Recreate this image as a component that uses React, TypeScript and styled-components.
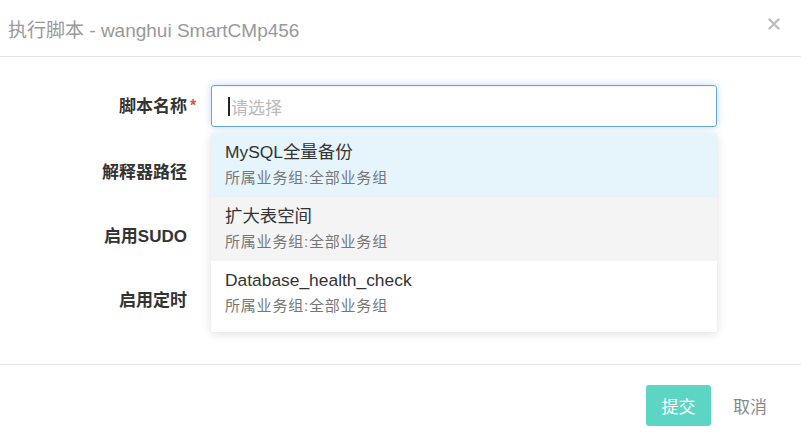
import React from 'react';
import styled, {createGlobalStyle} from 'styled-components';

const GlobalStyle = createGlobalStyle`
  html, body {
    margin: 0;
    padding: 0;
    background: #fff;
  }
  body {
    font-family: "Liberation Sans", Arial, "Noto Sans CJK SC", sans-serif;
    color: #333;
  }
`

const Modal = styled.div`
  width: 801px;
  height: 442px;
  background: #fff;
  display: flex;
  flex-direction: column;
  box-sizing: border-box;
`

const Header = styled.div`
  height: 56px;
  flex-shrink: 0;
  border-bottom: 1px solid #e5e5e5;
  display: flex;
  align-items: center;
  justify-content: space-between;
  padding: 0 21px 0 8px;
`

const Title = styled.h4`
  margin: 0;
  font-weight: normal;
  font-size: 19px;
  color: #999;
  padding-top: 1px;
`

const Close = styled.button`
  border: none;
  background: none;
  padding: 0;
  margin-top: -9px;
  cursor: pointer;
  display: flex;
`

const Body = styled.div`
  flex: 1;
  padding-top: 28px;
  display: flex;
  flex-direction: column;
  gap: 22px;
`

const Row = styled.div`
  display: grid;
  grid-template-columns: 187px 506px;
  column-gap: 24px;
  align-items: center;
  height: 42px;
  position: relative;
`

const Label = styled.label`
  text-align: right;
  font-size: 17px;
  font-weight: bold;
  color: #333;
  position: relative;
  top: ${p => (p.$shift ? p.$shift : 0)}px;
`

const Required = styled.span`
  position: absolute;
  left: 100%;
  top: 5px;
  margin-left: 3px;
  font-size: 16px;
  color: #d9534f;
  font-weight: bold;
`

const Field = styled.div`
  position: relative;
  height: 100%;
`

const Select = styled.div`
  height: 42px;
  box-sizing: border-box;
  border: 1px solid #66a9d8;
  border-radius: 3px;
  box-shadow: inset 0 1px 1px rgba(0, 0, 0, 0.05), 0 0 7px rgba(102, 175, 233, 0.45);
  display: flex;
  align-items: center;
  padding-left: 16px;
  font-size: 17px;
`

const Caret = styled.span`
  display: inline-block;
  width: 2px;
  height: 19px;
  background: #222;
  margin-right: 1px;
`

const Placeholder = styled.span`
  color: #bbb;
`

const Menu = styled.ul`
  position: absolute;
  top: 48px;
  left: 0;
  width: 506px;
  margin: 0;
  padding: 0 0 7px;
  list-style: none;
  background: #fff;
  border-radius: 3px;
  box-shadow: 0 2px 10px rgba(0, 0, 0, 0.13);
  z-index: 10;
`

const Option = styled.li`
  height: 64px;
  box-sizing: border-box;
  padding: 8px 14px 0;
  background: ${p => p.$bg};
`

const OptionName = styled.div`
  font-size: 17.4px;
  line-height: 22px;
  color: #333;
`

const OptionGroup = styled.div`
  margin-top: 5px;
  font-size: 15px;
  letter-spacing: 0.8px;
  line-height: 20px;
  color: #777;
`

const Footer = styled.div`
  height: 78px;
  flex-shrink: 0;
  box-sizing: border-box;
  border-top: 1px solid #e5e5e5;
  display: flex;
  justify-content: flex-end;
  align-items: flex-start;
  padding: 20px 24px 0 0;
  gap: 12px;
`

const Submit = styled.button`
  width: 65px;
  height: 41px;
  border: none;
  border-radius: 3px;
  background: #5dd5c5;
  color: #fff;
  font-size: 17px;
  font-family: inherit;
`

const Cancel = styled.button`
  height: 41px;
  border: none;
  background: none;
  color: #888;
  font-size: 17px;
  font-family: inherit;
  padding: 0 10px;
`

const scripts = [
  {name: 'MySQL全量备份', group: '全部业务组', bg: '#e6f4fc'},
  {name: '扩大表空间', group: '全部业务组', bg: '#f4f4f4'},
  {name: 'Database_health_check', group: '全部业务组', bg: '#fff'},
]

const App: React.FC = () => {
  return (
    <Modal>
      <GlobalStyle />
      <Header>
        <Title>执行脚本 - wanghui SmartCMp456</Title>
        <Close aria-label="close">
          <svg width="12" height="12" viewBox="0 0 12 12">
            <path d="M1.5 1.5 L10.5 10.5 M10.5 1.5 L1.5 10.5" stroke="#bdbdbd" strokeWidth="2.4" strokeLinecap="round" />
          </svg>
        </Close>
      </Header>
      <Body>
        <Row>
          <Label $shift={-2}>脚本名称<Required>*</Required></Label>
          <Field>
            <Select>
              <Caret />
              <Placeholder>请选择</Placeholder>
            </Select>
            <Menu>
              {scripts.map(s => (
                <Option key={s.name} $bg={s.bg}>
                  <OptionName>{s.name}</OptionName>
                  <OptionGroup>所属业务组:{s.group}</OptionGroup>
                </Option>
              ))}
            </Menu>
          </Field>
        </Row>
        <Row>
          <Label>解释器路径</Label>
          <Field />
        </Row>
        <Row>
          <Label>启用SUDO</Label>
          <Field />
        </Row>
        <Row>
          <Label>启用定时</Label>
          <Field />
        </Row>
      </Body>
      <Footer>
        <Submit>提交</Submit>
        <Cancel>取消</Cancel>
      </Footer>
    </Modal>
  )
}

export default App;
